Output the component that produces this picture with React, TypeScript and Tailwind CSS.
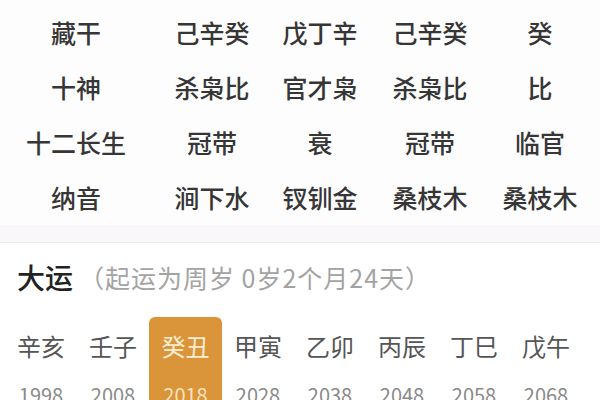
import React from 'react';

// --- Data ---
const TABLE: string[][] = [
  ['藏干', '己辛癸', '戊丁辛', '己辛癸', '癸'],
  ['十神', '杀枭比', '官才枭', '杀枭比', '比'],
  ['十二长生', '冠带', '衰', '冠带', '临官'],
  ['纳音', '涧下水', '钗钏金', '桑枝木', '桑枝木'],
];

const DAYUN = [
  { gz: '辛亥', year: 1998 },
  { gz: '壬子', year: 2008 },
  { gz: '癸丑', year: 2018, active: true },
  { gz: '甲寅', year: 2028 },
  { gz: '乙卯', year: 2038 },
  { gz: '丙辰', year: 2048 },
  { gz: '丁巳', year: 2058 },
  { gz: '戊午', year: 2068 },
];

function App() {
  return (
    <div className="w-[600px] h-[400px] overflow-hidden bg-white font-['Noto_Sans_CJK_SC',sans-serif]">
      {/* Pillar detail table */}
      <div className="bg-[#fefdfe] pt-[5px]">
        {TABLE.map((row, i) => (
          <div key={i} className="grid grid-cols-[152px_120px_96px_124px_96px] h-[55px] items-center">
            {row.map((cell, j) => (
              <div key={j} className="text-center text-[25px] leading-none font-medium text-[#363636]">
                {cell}
              </div>
            ))}
          </div>
        ))}
      </div>

      {/* Divider band */}
      <div className="h-[18px] bg-[#faf7fa] border-b border-[#efeaef]" />

      {/* Da Yun */}
      <div>
        <div className="h-[68px] flex items-center px-[17px] gap-[6px]">
          <span className="text-[28px] leading-none font-medium text-[#222222]">大运</span>
          <span className="text-[25px] leading-none text-[#a3a3a3] tracking-[1px]">（起运为周岁 0岁2个月24天）</span>
        </div>

        <div className="flex pl-[5px] mt-[6px]">
          {DAYUN.map((d) => (
            <div
              key={d.year}
              className={
                d.active
                  ? 'w-[73px] flex flex-col items-center pt-[14px] rounded-t-[6px] bg-[#da953a]'
                  : 'w-[72px] flex flex-col items-center pt-[14px]'
              }
            >
              <span
                className={
                  d.active
                    ? 'text-[24px] leading-[30px] text-[#fdeed3]'
                    : 'text-[24px] leading-[30px] text-[#555555]'
                }
              >
                {d.gz}
              </span>
              <span
                className={
                  d.active
                    ? 'mt-[20px] text-[20px] leading-[28px] text-[#fbe4bd]'
                    : 'mt-[20px] text-[20px] leading-[28px] text-[#8a8a8a]'
                }
              >
                {d.year}
              </span>
            </div>
          ))}
        </div>
      </div>
    </div>
  );
}

export default App;
